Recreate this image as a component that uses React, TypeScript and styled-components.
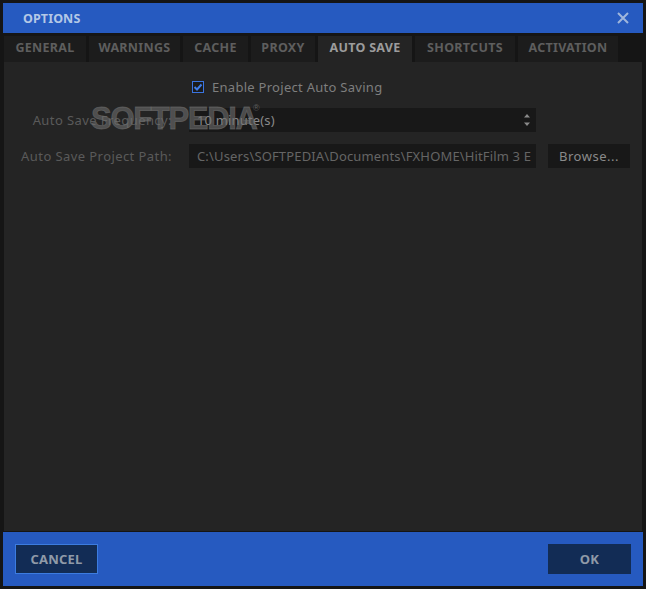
import React from "react";
import styled, { createGlobalStyle } from "styled-components";

const GlobalStyle = createGlobalStyle`
  html, body {
    margin: 0;
    padding: 0;
    background: #151515;
  }
  * {
    box-sizing: border-box;
  }
`;

const Window = styled.div`
  width: 646px;
  height: 589px;
  padding: 3px;
  display: flex;
  flex-direction: column;
  background: #151515;
  font-family: "Noto Sans", "Liberation Sans", sans-serif;
  overflow: hidden;
`;

const TitleBar = styled.div`
  height: 30px;
  flex: none;
  display: flex;
  align-items: center;
  justify-content: space-between;
  padding: 0 14px 0 20px;
  background: #265ac0;
`;

const Title = styled.span`
  font-size: 12.5px;
  font-weight: 700;
  letter-spacing: 0.1px;
  color: #b4c8e6;
`;

const CloseIcon = styled.svg`
  width: 12px;
  height: 12px;
  stroke: #9fb6dc;
  stroke-width: 2;
`;

const TabBar = styled.div`
  flex: none;
  display: flex;
  gap: 3px;
  height: 26px;
  margin-top: 3px;
  padding-left: 1px;
`;

const Tab = styled.div<{ $active?: boolean; $w: number }>`
  width: ${({ $w }) => $w}px;
  display: flex;
  align-items: center;
  justify-content: center;
  padding-bottom: 3px;
  font-size: 12.5px;
  font-weight: 700;
  letter-spacing: 0.3px;
  color: ${({ $active }) => ($active ? "#9c9c9c" : "#5e5e5e")};
  background: ${({ $active }) => ($active ? "#242424" : "#1c1c1c")};
`;

const Content = styled.div`
  position: relative;
  flex: 1;
  margin: 0 1px;
  display: flex;
  flex-direction: column;
  background: #242424;
`;

const CheckRow = styled.label`
  display: flex;
  align-items: center;
  gap: 8px;
  height: 24px;
  margin: 13px 0 -3px 188px;
  font-size: 13px;
  letter-spacing: 0.28px;
  color: #7e7e7e;
`;

const CheckBox = styled.span`
  width: 12px;
  height: 12px;
  display: flex;
  align-items: center;
  justify-content: center;
  border: 1px solid #3a74e0;
  background: #1b1b1b;
`;

const FieldRow = styled.div`
  display: flex;
  align-items: center;
  height: 24px;
  margin-top: 12px;
`;

const FieldLabel = styled.span`
  width: 168px;
  margin-right: 17px;
  text-align: right;
  font-size: 13px;
  letter-spacing: 0.42px;
  color: #5a5a5a;
  white-space: nowrap;
`;

const Field = styled.div`
  width: 347px;
  height: 24px;
  display: flex;
  align-items: center;
  justify-content: space-between;
  padding: 0 5px 0 8px;
  background: #181818;
  font-size: 13px;
  letter-spacing: 0.15px;
  color: #8a8a8a;
  overflow: hidden;
  white-space: nowrap;
`;

const PathText = styled.span`
  width: 334px;
  overflow: hidden;
  color: #656565;
`;

const Spinner = styled.svg`
  width: 8px;
  height: 16px;
  fill: #8a8a8a;
  flex: none;
`;

const BrowseButton = styled.div`
  width: 82px;
  height: 24px;
  margin-left: 12px;
  display: flex;
  align-items: center;
  justify-content: center;
  background: #181818;
  font-size: 13px;
  letter-spacing: 0.5px;
  color: #8a8a8a;
`;

const Watermark = styled.span`
  position: absolute;
  left: 87px;
  top: 38px;
  font-family: "Liberation Sans", sans-serif;
  font-size: 31px;
  font-weight: 700;
  line-height: 38px;
  letter-spacing: -1.3px;
  color: rgba(110, 110, 110, 0.6);
  -webkit-text-stroke: 0.8px rgba(110, 110, 110, 0.6);
`;

const WatermarkMark = styled.span`
  position: absolute;
  left: 249px;
  top: 41px;
  font-family: "Liberation Sans", sans-serif;
  font-size: 9px;
  color: rgba(120, 120, 120, 0.7);
`;

const Footer = styled.div`
  flex: none;
  height: 54px;
  margin-top: 1px;
  display: flex;
  align-items: center;
  justify-content: space-between;
  padding: 0 12px;
  background: #265ac0;
`;

const FooterButton = styled.div<{ $outlined?: boolean }>`
  width: 83px;
  height: 30px;
  display: flex;
  align-items: center;
  justify-content: center;
  font-size: 13px;
  font-weight: 700;
  letter-spacing: 0.2px;
  color: #8f9aa8;
  background: #122c55;
  border: 1px solid ${({ $outlined }) => ($outlined ? "#3c7ce0" : "#122c55")};
`;

const tabs = [
  { label: "GENERAL", w: 82 },
  { label: "WARNINGS", w: 91 },
  { label: "CACHE", w: 65 },
  { label: "PROXY", w: 64 },
  { label: "AUTO SAVE", w: 94 },
  { label: "SHORTCUTS", w: 100 },
  { label: "ACTIVATION", w: 100 },
];

const App: React.FC = () => {
  return (
    <Window>
      <GlobalStyle />
      <TitleBar>
        <Title>OPTIONS</Title>
        <CloseIcon viewBox="0 0 12 12">
          <path d="M1 1 L11 11 M11 1 L1 11" />
        </CloseIcon>
      </TitleBar>
      <TabBar>
        {tabs.map((t) => (
          <Tab key={t.label} $w={t.w} $active={t.label === "AUTO SAVE"}>
            {t.label}
          </Tab>
        ))}
      </TabBar>
      <Content>
        <CheckRow>
          <CheckBox>
            <svg width="10" height="10" viewBox="0 0 10 10">
              <path d="M1.5 5 L4 7.5 L8.5 2.5" fill="none" stroke="#3f7de8" strokeWidth="2" />
            </svg>
          </CheckBox>
          Enable Project Auto Saving
        </CheckRow>
        <FieldRow>
          <FieldLabel>Auto Save Frequency:</FieldLabel>
          <Field>
            10 minute(s)
            <Spinner viewBox="0 0 8 16">
              <path d="M4 2 L7 5.5 H1 Z M1 10.5 H7 L4 14 Z" />
            </Spinner>
          </Field>
        </FieldRow>
        <FieldRow>
          <FieldLabel>Auto Save Project Path:</FieldLabel>
          <Field>
            <PathText>C:\Users\SOFTPEDIA\Documents\FXHOME\HitFilm 3 Express</PathText>
          </Field>
          <BrowseButton>Browse...</BrowseButton>
        </FieldRow>
        <Watermark>SOFTPEDIA</Watermark>
        <WatermarkMark>®</WatermarkMark>
      </Content>
      <Footer>
        <FooterButton $outlined>CANCEL</FooterButton>
        <FooterButton>OK</FooterButton>
      </Footer>
    </Window>
  );
};

export default App;
